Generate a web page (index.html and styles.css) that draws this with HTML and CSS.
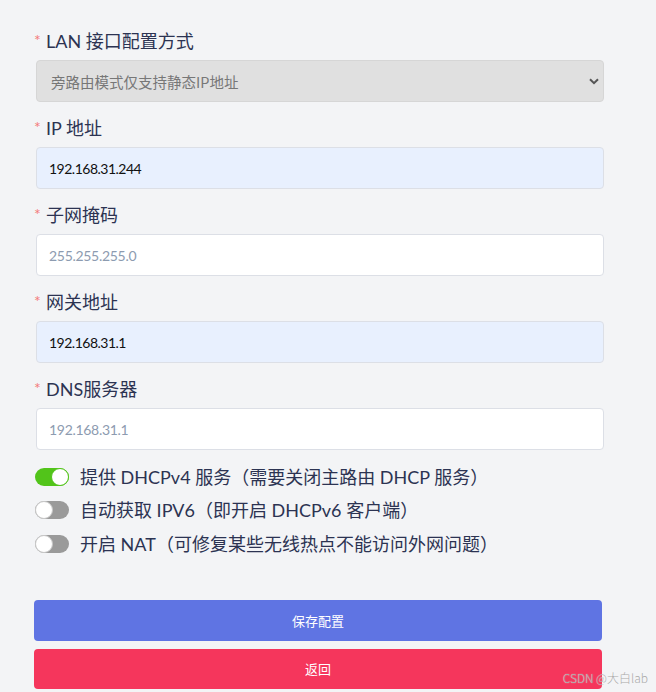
FILE: index.html
```html
<!DOCTYPE html>
<html lang="zh-CN">
<head>
<meta charset="utf-8">
<link rel="stylesheet" href="styles.css">
</head>
<body>
<div class="page">
  <form class="form">
    <div class="group">
      <label class="label"><span class="req">*</span>LAN 接口配置方式</label>
      <div class="select-wrap">
        <select class="select" disabled>
          <option>旁路由模式仅支持静态IP地址</option>
        </select>
        <svg class="chev" width="10" height="7" viewBox="0 0 10 7"><path d="M1 1.2 L5 5.2 L9 1.2" fill="none" stroke="#555" stroke-width="2"/></svg>
      </div>
    </div>
    <div class="group">
      <label class="label"><span class="req">*</span>IP 地址</label>
      <input class="input filled" value="192.168.31.244">
    </div>
    <div class="group">
      <label class="label"><span class="req">*</span>子网掩码</label>
      <input class="input" placeholder="255.255.255.0">
    </div>
    <div class="group">
      <label class="label"><span class="req">*</span>网关地址</label>
      <input class="input filled" value="192.168.31.1">
    </div>
    <div class="group">
      <label class="label"><span class="req">*</span>DNS服务器</label>
      <input class="input" placeholder="192.168.31.1">
    </div>
    <div class="toggles">
      <div class="trow"><span class="switch on"><span class="knob"></span></span><span class="ttext">提供 DHCPv4 服务（需要关闭主路由 DHCP 服务）</span></div>
      <div class="trow"><span class="switch"><span class="knob"></span></span><span class="ttext">自动获取 IPV6（即开启 DHCPv6 客户端）</span></div>
      <div class="trow"><span class="switch"><span class="knob"></span></span><span class="ttext">开启 NAT（可修复某些无线热点不能访问外网问题）</span></div>
    </div>
    <div class="actions">
      <button type="button" class="btn save">保存配置</button>
      <button type="button" class="btn back">返回</button>
    </div>
  </form>
  <div class="watermark">CSDN @大白lab</div>
</div>
</body>
</html>
```
FILE: styles.css
```css
* { box-sizing: border-box; }
html, body {
  margin: 0;
  padding: 0;
  background: #f3f4f6;
}
body {
  font-family: Lato, "Noto Sans CJK SC", sans-serif;
  color: #2c3352;
}
.page {
  position: relative;
  width: 656px;
  height: 692px;
  overflow: hidden;
}
.form {
  display: flex;
  flex-direction: column;
  padding: 29px 0 0 36px;
  width: 604px;
}
.group {
  display: flex;
  flex-direction: column;
  gap: 6px;
  margin-bottom: 14px;
}
.label {
  display: flex;
  align-items: flex-start;
  font-size: 18px;
  line-height: 25px;
  height: 25px;
  margin-left: -2px;
  color: #2c3352;
}
.req {
  color: #f47a7a;
  width: 12px;
  font-size: 16px;
  line-height: 22px;
}
.select-wrap {
  position: relative;
  height: 42px;
}
.select {
  appearance: none;
  -webkit-appearance: none;
  width: 568px;
  height: 42px;
  border: 1px solid #d6d6d6;
  border-radius: 4px;
  background: #e0e0e0;
  color: #777;
  font-family: "Noto Sans CJK SC", sans-serif;
  font-size: 14.5px;
  padding: 0 14px;
  opacity: 1;
}
.chev {
  position: absolute;
  right: 5px;
  top: 18px;
}
.input {
  width: 568px;
  height: 42px;
  border: 1px solid #dcdfe6;
  border-radius: 4px;
  background: #fff;
  padding: 0 12px;
  font-family: Lato, "Noto Sans CJK SC", sans-serif;
  font-size: 14px;
  letter-spacing: -0.5px;
  color: #111;
  outline: none;
}
.input::placeholder {
  color: #8d9bb0;
  letter-spacing: -0.3px;
}
.input.filled {
  background: #e8f0fe;
}
.toggles {
  display: flex;
  flex-direction: column;
  margin-top: -4px;
  margin-left: -1px;
}
.trow {
  display: flex;
  align-items: center;
  gap: 11px;
  height: 33.5px;
}
.switch {
  position: relative;
  display: inline-block;
  width: 34px;
  height: 18px;
  border-radius: 9px;
  background: #9a9a9a;
  flex: none;
}
.switch .knob {
  position: absolute;
  top: 0;
  left: 0;
  width: 18px;
  height: 18px;
  border-radius: 50%;
  background: #fff;
  border: 1px solid #c8c8c8;
}
.switch.on {
  background: #52c41a;
}
.switch.on .knob {
  left: 16px;
  border-color: #52c41a;
}
.ttext {
  font-size: 18px;
  letter-spacing: 0;
  line-height: 24px;
  color: #2c3352;
}
.actions {
  display: flex;
  flex-direction: column;
  gap: 8px;
  margin-top: 39px;
  margin-left: -2px;
}
.btn {
  width: 568px;
  height: 41px;
  border: none;
  border-radius: 4px;
  color: #fff;
  font-family: "Noto Sans CJK SC", sans-serif;
  font-size: 13px;
}
.btn.save { background: #5f74e3; }
.btn.back { background: #f5365c; height: 40px; }
.watermark {
  position: absolute;
  right: 8px;
  bottom: 6px;
  font-family: "Noto Sans CJK SC", sans-serif;
  font-size: 12px;
  font-weight: 300;
  color: #a8a8a8;
  text-shadow: 0 0 1px rgba(255,255,255,0.8);
}
```
